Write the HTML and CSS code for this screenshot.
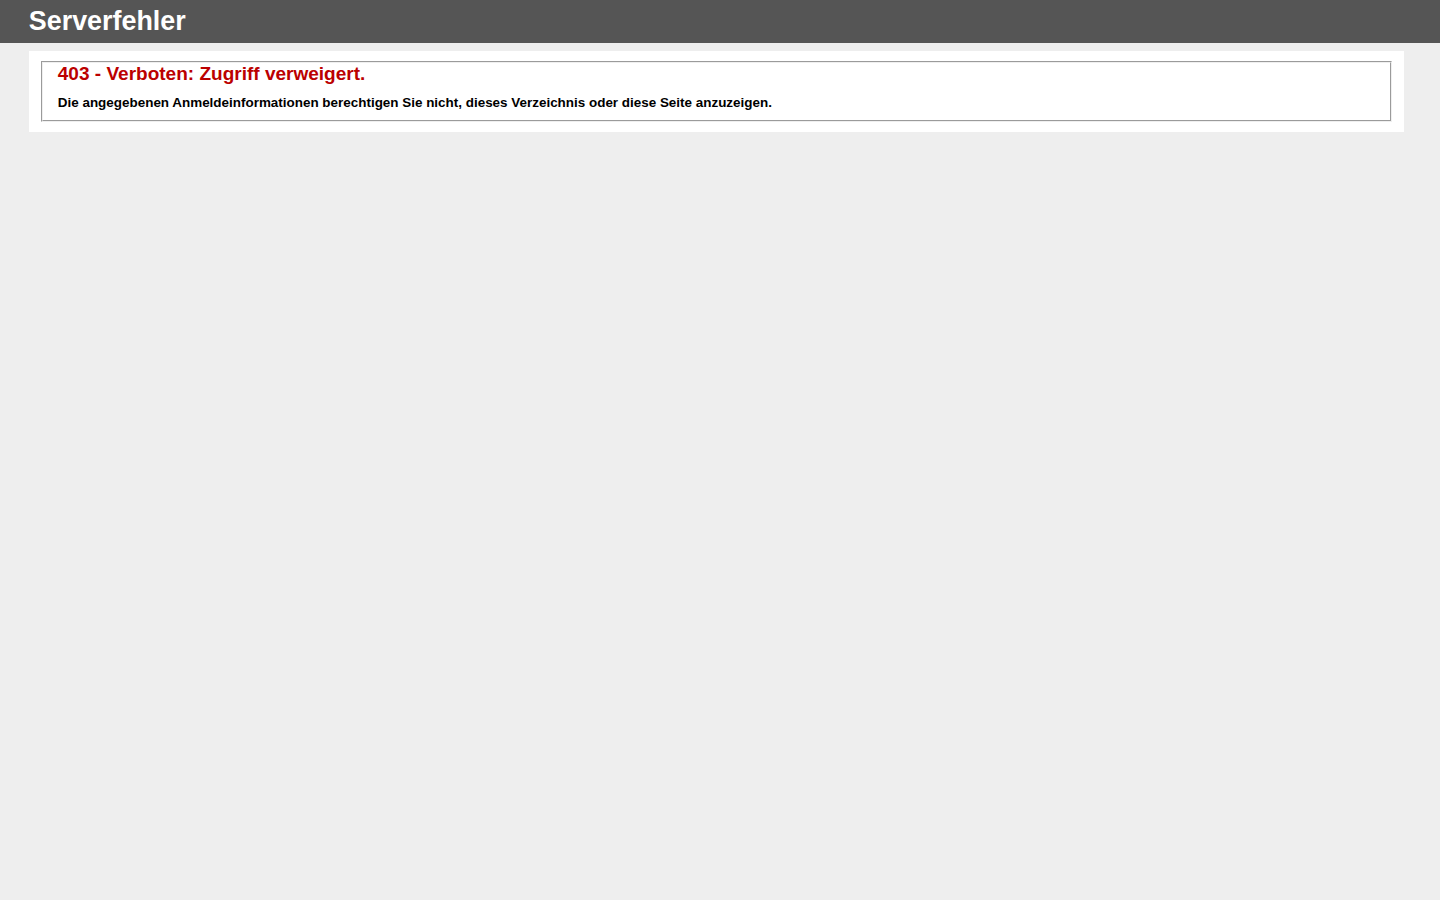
FILE: index.html
```html
<!DOCTYPE html>
<html lang="de">
<head>
<meta charset="utf-8">
<title>403 - Verboten: Zugriff verweigert.</title>
<link rel="stylesheet" href="styles.css">
</head>
<body class="page">
<div class="header"><h1 class="title">Serverfehler</h1></div>
<div class="content">
 <div class="content-container"><fieldset class="box">
  <h2 class="err">403 - Verboten: Zugriff verweigert.</h2>
  <h3 class="msg">Die angegebenen Anmeldeinformationen berechtigen Sie nicht, dieses Verzeichnis oder diese Seite anzuzeigen.</h3>
 </fieldset></div>
</div>
</body>
</html>
```

FILE: styles.css
```css
.page{margin:0;font-size:.7em;font-family:"Liberation Sans", Arial, Helvetica, sans-serif;background:#EEEEEE;}
.box{padding:0 15px 10px 15px;}
.title{font-size:2.4em;margin:0;color:#FFF;}
.err{font-size:1.7em;margin:0;color:#BB0000;}
.msg{font-size:1.2em;margin:10px 0 0 0;color:#000000;}
.header{width:96%;margin:0;padding:6px 2% 6px 2%;font-family:"Liberation Sans", Arial, sans-serif;color:#FFF;background-color:#555555;}
.content{margin:0 0 0 2%;position:relative;}
.content-container{background:#FFF;width:96%;margin-top:8px;padding:10px;position:relative;}
```
